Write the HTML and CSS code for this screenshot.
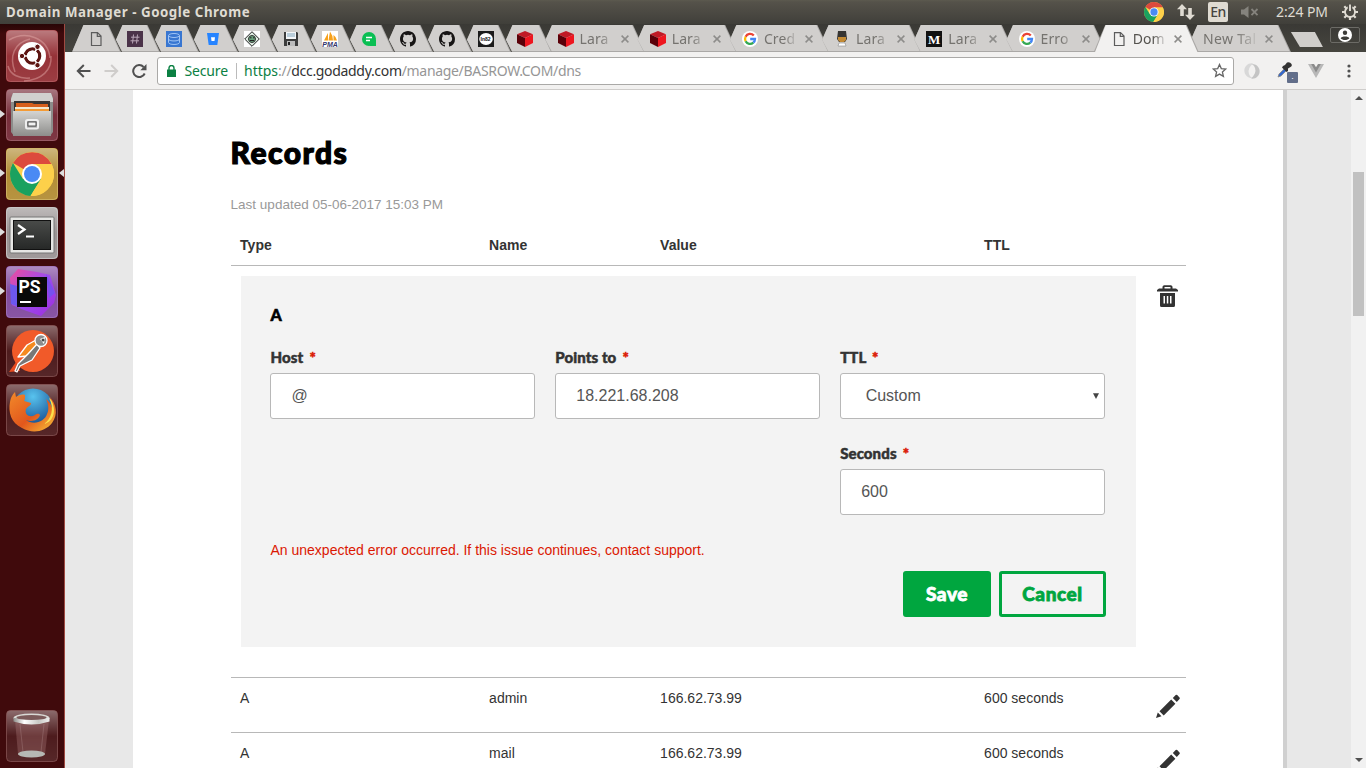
FILE: index.html
```html
<!DOCTYPE html>
<html lang="en">
<head>
<meta charset="utf-8">
<title>Domain Manager</title>
<link rel="stylesheet" href="styles.css">
</head>
<body>
<svg class="defs" width="0" height="0">
  <defs>
    <linearGradient id="tile" x1="0" y1="0" x2="0" y2="1"><stop offset="0" stop-color="#fff" stop-opacity=".4"/><stop offset=".5" stop-color="#fff" stop-opacity=".07"/><stop offset="1" stop-color="#fff" stop-opacity=".12"/></linearGradient>
    <linearGradient id="steel" x1="0" y1="0" x2="0" y2="1"><stop offset="0" stop-color="#d4d4d2"/><stop offset="1" stop-color="#8d8d8b"/></linearGradient>
    <linearGradient id="term" x1="0" y1="0" x2="0" y2="1"><stop offset="0" stop-color="#494b49"/><stop offset="1" stop-color="#262827"/></linearGradient>
    <linearGradient id="storm" x1="0" y1="0" x2="1" y2="1"><stop offset="0" stop-color="#f04c9c"/><stop offset=".5" stop-color="#9a4cf0"/><stop offset="1" stop-color="#a02cdc"/></linearGradient>
    <linearGradient id="fox" x1="0" y1="0" x2="1" y2="1"><stop offset="0" stop-color="#f28a2a"/><stop offset=".55" stop-color="#e2571c"/><stop offset="1" stop-color="#f9c63a"/></linearGradient>
    <radialGradient id="globe" cx=".5" cy=".2" r=".8"><stop offset="0" stop-color="#58c3ee"/><stop offset="1" stop-color="#0d3f86"/></radialGradient>
    <linearGradient id="rim" x1="0" y1="0" x2="1" y2="0"><stop offset="0" stop-color="#8d8d89"/><stop offset=".3" stop-color="#fff"/><stop offset=".7" stop-color="#c8c8c4"/><stop offset="1" stop-color="#eee"/></linearGradient>
    <symbol id="page" viewBox="0 0 16 16"><path d="M3.500 1.600h6l3.500 3.500v9.400H3.500zM9.300 1.800v3.600h3.500" fill="none" stroke="#5c5c5c" stroke-width="1.200"/></symbol>
    <symbol id="close" viewBox="0 0 8 8"><path d="M.6.6l6.800 6.800M7.400.6L.6 7.400" stroke="#8d8c8a" stroke-width="1.500" fill="none"/></symbol>
    <symbol id="cube" viewBox="0 0 16 16"><path d="M8 0l8 3.200L8 7 0 3.200z" fill="#c01a25"/><path d="M0 3.200L8 7v9l-8-4z" fill="#5a0008"/><path d="M16 3.200L8 7v9l8-4z" fill="#ee161f"/></symbol>
    <symbol id="google" viewBox="0 0 16 16"><circle cx="8" cy="8" r="8" fill="#fff"/><path d="M11.800 4.600A5 5 0 0 0 3.600 5.700" fill="none" stroke="#ea4335" stroke-width="2.300"/><path d="M3.600 5.700a5 5 0 0 0 0 4.600" fill="none" stroke="#fbbc05" stroke-width="2.300"/><path d="M3.600 10.300a5 5 0 0 0 7.700 1.400" fill="none" stroke="#34a853" stroke-width="2.300"/><path d="M11.300 11.700A5 5 0 0 0 13 8H8.200" fill="none" stroke="#4285f4" stroke-width="2.300"/></symbol>
    <symbol id="github" viewBox="0 0 16 16"><path fill="#171515" d="M8 0C3.58 0 0 3.58 0 8c0 3.54 2.29 6.53 5.47 7.59.4.07.55-.17.55-.38 0-.19-.01-.82-.01-1.49-2.01.37-2.53-.49-2.69-.94-.09-.23-.48-.94-.82-1.13-.28-.15-.68-.52-.01-.53.63-.01 1.08.58 1.23.82.72 1.21 1.87.87 2.33.66.07-.52.28-.87.51-1.07-1.78-.2-3.64-.89-3.64-3.95 0-.87.31-1.59.82-2.15-.08-.2-.36-1.02.08-2.12 0 0 .67-.21 2.2.82a7.6 7.6 0 0 1 4 0c1.53-1.04 2.2-.82 2.2-.82.44 1.1.16 1.92.08 2.12.51.56.82 1.27.82 2.15 0 3.07-1.87 3.75-3.65 3.95.29.25.54.73.54 1.48 0 1.07-.01 1.93-.01 2.2 0 .21.15.46.55.38A8.01 8.01 0 0 0 16 8c0-4.42-3.58-8-8-8z"/></symbol>
    <symbol id="chrome" viewBox="0 0 44 44"><circle cx="22" cy="22" r="22" fill="#fdd04a"/><path d="M22 22L3 11A22 22 0 0 1 41.500 12H22z" fill="#dc4a3d"/><path d="M3 11A22 22 0 0 0 20.500 44L31 27 22 22 13 27z" fill="#1aa15f"/><path d="M22 12h19.500A22 22 0 0 1 20.500 44L31 27z" fill="#fdd04a"/><circle cx="22" cy="22" r="10" fill="#fff"/><circle cx="22" cy="22" r="8" fill="#4a8af4"/></symbol>
    <symbol id="pencil" viewBox="0 0 24 24"><path fill="#333" d="M0 24l1.800-5.500 3.700 3.700zM3.500 17.300L15.200 5.600l4.200 4.200L7.700 21.500zM16.800 4L19.700 1.100q.8-.6 1.500 0l2.300 2.300q.6.700 0 1.500L20.800 8z"/></symbol>
  </defs>
</svg>

<div class="desktop">
  <header class="panel">
    <span class="panel-title">Domain Manager - Google Chrome</span>
    <div class="indicators">
      <svg class="i-chrome" width="20" height="20"><use href="#chrome"/></svg>
      <svg class="i-net" width="18" height="16" viewBox="0 0 18 16"><path d="M5 0l5 5.300H6.800V12H3.200V5.300H0zM13 16l-5-5.300h3.200V4h3.600v6.700H18z" fill="#dfdbd2"/></svg>
      <span class="lang">En</span>
      <svg class="i-vol" width="18" height="12" viewBox="0 0 18 12"><path d="M0 3.500h3L7.500 0v12L3 8.500H0z" fill="#85837d"/><path d="M10.500 3l6 6.200M16.500 3l-6 6.200" stroke="#85837d" stroke-width="1.800"/></svg>
      <span class="clock">2:24 PM</span>
      <svg class="i-gear" width="16" height="16" viewBox="0 0 16 16"><g stroke="#dfdbd2" fill="none"><circle cx="8" cy="8" r="5" stroke-width="1.900"/><path d="M13 8h3M8 13v3M3 8H0M4.500 4.500L2.300 2.300M11.500 4.500l2.200-2.200M4.500 11.500l-2.200 2.200M11.500 11.500l2.200 2.200" stroke-width="2.200"/><path d="M8 0v6" stroke="#4f4d47" stroke-width="4.500"/><path d="M8 .5V7" stroke-width="1.900"/></g></svg>
    </div>
  </header>

  <div class="workspace">
    <nav class="launcher">
      <div class="app"><svg width="52" height="52" viewBox="0 0 52 52"><rect width="52" height="52" rx="4" fill="#8e2329"/><rect x=".5" y=".5" width="51" height="51" rx="4" fill="url(#tile)" stroke="#b96a6c" stroke-opacity=".7"/><g fill="none" stroke="#e6b0ac" stroke-opacity=".45" stroke-width="1.500"><path d="M3 10C20 0 42 8 44 28M9 42C3 26 8 13 24 9M18 51C36 50 46 40 45 26M2 36c2 9 12 13 22 12"/></g><circle cx="26" cy="26" r="14" fill="#fff"/><circle cx="26.500" cy="26" r="7.200" fill="none" stroke="#5d1512" stroke-width="3.200"/><path d="M26.500 26L14 26M26.500 26l6.500 11M26.500 26L33 15" stroke="#fff" stroke-width="1.500"/><circle cx="26.500" cy="26" r="5.500" fill="#fff"/><g fill="#5d1512" stroke="#fff"><circle cx="16" cy="26" r="2.700"/><circle cx="31.500" cy="16.800" r="2.700"/><circle cx="31.500" cy="35.200" r="2.700"/></g></svg></div>
      <div class="app arrow"><svg width="52" height="52" viewBox="0 0 52 52"><rect width="52" height="52" rx="4" fill="#6d1d2b"/><rect x=".5" y=".5" width="51" height="51" rx="4" fill="url(#tile)" stroke="#ad7a80" stroke-opacity=".6"/><path d="M7 4h38l2 5v34l-3 4H8l-3-4V9z" fill="#8c8c8a"/><path d="M7 4h38l2 6v3H5v-3z" fill="#d0d0ce"/><path d="M8 12h36v12H8z" fill="#373533"/><path d="M10 14h16l2 1h14v7H10z" fill="#d65f1c"/><path d="M9 18h34v3H9z" fill="#f3e8cf"/><path d="M9 20h34v3H9z" fill="#f49b35"/><path d="M7 22h38v25H7z" fill="url(#steel)"/><rect x="20" y="31" width="12" height="8.500" rx="1.500" fill="#999" stroke="#eee" stroke-width="2"/><path d="M22 33h8v4h-8z" fill="#f2f2f2" stroke="#555"/></svg></div>
      <div class="app arrow active"><svg width="52" height="52" viewBox="0 0 52 52"><rect width="52" height="52" rx="4" fill="#ad8527"/><rect x=".5" y=".5" width="51" height="51" rx="4" fill="url(#tile)" stroke="#dcc67f" stroke-opacity=".6"/><use href="#chrome" x="4" y="4" width="44" height="44"/></svg></div>
      <div class="app arrow"><svg width="52" height="52" viewBox="0 0 52 52"><rect width="52" height="52" rx="4" fill="#938c8c"/><rect x=".5" y=".5" width="51" height="51" rx="4" fill="url(#tile)" stroke="#ddd" stroke-opacity=".6"/><rect x="4" y="10" width="44" height="36" rx="1" fill="#e6e6e4" stroke="#777"/><rect x="7.500" y="13.500" width="37" height="29" fill="url(#term)" stroke="#111"/><path d="M12 18l6.500 4.500L12 27" fill="none" stroke="#fff" stroke-width="2.200"/><path d="M20 29.500h8" stroke="#fff" stroke-width="2"/></svg></div>
      <div class="app arrow"><svg width="52" height="52" viewBox="0 0 52 52"><rect width="52" height="52" rx="4" fill="#793e98"/><rect x=".5" y=".5" width="51" height="51" rx="4" fill="url(#tile)" stroke="#ad87c4" stroke-opacity=".6"/><path d="M4 12L12 3l19 3 13 3 6 20-2 8-13 13-17-6-12-5z" fill="url(#storm)"/><path d="M4 18l7 2v20l-6-2z" fill="#6c58ee"/><path d="M40 8l9 19-6 5z" fill="#7750ef"/><rect x="11" y="11" width="30" height="30" fill="#090909"/><text class="ps-mark" x="12.500" y="27">PS</text><path d="M14 36h11" stroke="#fff" stroke-width="2"/></svg></div>
      <div class="app"><svg width="52" height="52" viewBox="0 0 52 52"><rect x=".5" y=".5" width="51" height="51" rx="4" fill="url(#tile)" stroke="#8d5b5b" stroke-opacity=".7"/><circle cx="27" cy="26" r="21" fill="#f15a29"/><path d="M10 37l-7 10 11-1z" fill="#e94b20"/><g stroke="#fff" stroke-width="1.300" stroke-linejoin="round"><path d="M12 32l9-12 9-5 3 4-13 12z" fill="#f58a1f"/><path d="M12 39l10-10 9-10 3 4-8 12-12 6-3 6-2-1z" fill="#777"/><circle cx="35" cy="15.500" r="6" fill="#8c8c8c"/></g><path d="M34 14l5-2-1 7z" fill="#fff"/><circle cx="37" cy="15" r="1.500" fill="#444"/></svg></div>
      <div class="app"><svg width="52" height="52" viewBox="0 0 52 52"><rect x=".5" y=".5" width="51" height="51" rx="4" fill="url(#tile)" stroke="#8d5b5b" stroke-opacity=".7"/><circle cx="27" cy="25" r="20.500" fill="url(#globe)"/><path d="M4 18C5 12 8 9 9 8l1 5c3-2 6-3 9-2 0 3 0 5-1 6l7 2c0 3-3 3-5 6-2 6 4 9 9 6 3-2 4-1 5 0-2 6-9 7-14 5 8 6 19 1 21-6 3-6 0-13-1-15 4 3 5 6 6 9 0-5-1-9-3-12 8 8 9 19 3 27-7 9-20 11-30 5C5 39 2 28 4 18z" fill="url(#fox)"/><path d="M43 14c6 11 2 21-5 26 8-2 12-10 9-20-1-3-2-5-4-6z" fill="#fbe04b"/></svg></div>
      <div class="app trash"><svg width="52" height="52" viewBox="0 0 52 52"><rect x=".5" y=".5" width="51" height="51" rx="4" fill="url(#tile)" stroke="#8d5b5b" stroke-opacity=".7"/><path d="M9 10h34l-4 34q-13 5-27 0z" fill="#b98787" fill-opacity=".3"/><path d="M14 14l3 28M38 14l-3 28" stroke="#b99" stroke-opacity=".3"/><ellipse cx="25.500" cy="44" rx="13.500" ry="3.500" fill="#b6b8b4"/><ellipse cx="25.500" cy="8" rx="18" ry="4.500" fill="#d9d9d5"/><path d="M7.500 8v3.500q18 6 36 0V8z" fill="url(#rim)"/><ellipse cx="25.500" cy="7.500" rx="15" ry="2.600" fill="#7b5a5a"/></svg></div>
    </nav>

    <main class="browser">
      <div class="tabstrip">
        <div class="tab mini first"><svg class="fav"><use href="#page"/></svg></div>
        <div class="tab mini"><svg class="fav" viewBox="0 0 16 16"><path d="M0 0h16v16H0z" fill="#4b3349"/><path d="M6.500 3.500l-1 9M10.500 3.500l-1 9M4 6.200h8.500M3.500 9.800H12" stroke="#b9a6b7"/></svg></div>
        <div class="tab mini"><svg class="fav" viewBox="0 0 16 16"><path d="M0 0h16v16H0z" fill="#3876d1"/><g fill="none" stroke="#9fc4f5" stroke-width="1"><ellipse cx="8" cy="4.500" rx="5.500" ry="2"/><path d="M2.500 4.500v7c0 2.600 11 2.600 11 0v-7M2.500 8c0 2.600 11 2.600 11 0"/></g></svg></div>
        <div class="tab mini"><svg class="fav" viewBox="0 0 16 16"><path d="M2 2h12l-1.700 12H3.700z" fill="#2684ff"/><path d="M6 6.300h4L9.500 10h-3z" fill="#fff"/></svg></div>
        <div class="tab mini"><svg class="fav" viewBox="0 0 16 16"><path d="M0 0h16v16H0z" fill="#fff"/><path d="M8 .7L15.300 8 8 15.300.7 8z" fill="#dfece2" stroke="#222"/><circle cx="8" cy="8" r="3.500" fill="#69a07b" stroke="#333"/><path d="M6 6.800h1.500M9 6.800h1.500M6 9.500h4" stroke="#222"/></svg></div>
        <div class="tab mini"><svg class="fav" viewBox="0 0 16 16"><path d="M1 1h13l1 1v13H1z" fill="#3c3c3c"/><path d="M3 1h10v7H3z" fill="#f4f6f8"/><path d="M4 3h8M4 5h8" stroke="#81a6bd"/><path d="M4 10h8v5H4z" fill="#bbb"/><path d="M5 11h2v3H5z" fill="#222"/></svg></div>
        <div class="tab mini"><svg class="fav" viewBox="0 0 16 16"><path d="M0 0h16v16H0z" fill="#fff"/><path d="M2 9.500L6 2v7.500zM6.500 9.500l1.500-9q3 4 3 9zM11.500 9.500V4q3 2 3.500 5.500z" fill="#f7a11b"/><text class="pma" x=".3" y="15.500">PMA</text></svg></div>
        <div class="tab mini"><svg class="fav" viewBox="0 0 16 16"><circle cx="8" cy="8" r="7" fill="#0abf53"/><path d="M9 9h6v6H9z" fill="#0abf53"/><path d="M5 6.500h6M5 9.500h4" stroke="#fff" stroke-width="1.300"/></svg></div>
        <div class="tab mini"><svg class="fav"><use href="#github"/></svg></div>
        <div class="tab mini"><svg class="fav"><use href="#github"/></svg></div>
        <div class="tab mini"><svg class="fav" viewBox="0 0 16 16"><path d="M0 0h16v16H0z" fill="#1b1b1b"/><ellipse cx="8" cy="8" rx="6.800" ry="6" fill="#fff"/><text class="inn" x="2.600" y="10">In82</text></svg></div>
        <div class="tab mini last-mini"><svg class="fav"><use href="#cube"/></svg></div>
        <div class="tab"><svg class="fav"><use href="#cube"/></svg><span class="label">Lara</span><svg class="x"><use href="#close"/></svg></div>
        <div class="tab"><svg class="fav"><use href="#cube"/></svg><span class="label">Lara</span><svg class="x"><use href="#close"/></svg></div>
        <div class="tab"><svg class="fav"><use href="#google"/></svg><span class="label">Cred</span><svg class="x"><use href="#close"/></svg></div>
        <div class="tab"><svg class="fav" viewBox="0 0 16 16"><path d="M4 0h8l1 8-2 3H5L3 8z" fill="#353432"/><path d="M4 6h8v3l-2 2H6L4 9z" fill="#c38a34"/><path d="M4 15l1-3h6l1 3z" fill="#fff" stroke="#777" stroke-width=".5"/></svg><span class="label">Lara</span><svg class="x"><use href="#close"/></svg></div>
        <div class="tab"><svg class="fav" viewBox="0 0 16 16"><path d="M0 0h16v16H0z" fill="#111"/><text class="medium" x="2" y="12.500">M</text></svg><span class="label">Lara</span><svg class="x"><use href="#close"/></svg></div>
        <div class="tab"><svg class="fav"><use href="#google"/></svg><span class="label">Erro</span><svg class="x"><use href="#close"/></svg></div>
        <div class="tab current"><svg class="fav"><use href="#page"/></svg><span class="label">Dom</span><svg class="x"><use href="#close"/></svg></div>
        <div class="tab plain"><span class="label">New Tal</span><svg class="x"><use href="#close"/></svg></div>
        <div class="newtab"></div>
        <div class="profile"><svg width="14" height="14" viewBox="0 0 14 14"><circle cx="7" cy="7" r="7" fill="#fff"/><circle cx="7" cy="4.800" r="2.200" fill="#3d3c38"/><path d="M2.600 10.200C3.500 8 10.500 8 11.400 10.200 9.500 12.600 4.500 12.600 2.600 10.200z" fill="#3d3c38"/></svg></div>
      </div>

      <div class="toolbar">
        <svg class="nav" width="15" height="14" viewBox="0 0 15 14"><path d="M14.500 7H2M7.800 1L1.800 7l6 6" fill="none" stroke="#505050" stroke-width="2"/></svg>
        <svg class="nav" width="15" height="14" viewBox="0 0 15 14"><path d="M.5 7H13M7.200 1l6 6-6 6" fill="none" stroke="#cfcdcb" stroke-width="2"/></svg>
        <svg class="nav" width="15" height="14" viewBox="0 0 15 14"><path d="M12.700 9.500A6 6 0 1 1 11.600 3" fill="none" stroke="#505050" stroke-width="2"/><path d="M14.500 0v6.200H8.300z" fill="#505050"/></svg>
        <div class="omnibox">
          <svg width="9" height="12" viewBox="0 0 9 12"><path d="M0 4.500h9V12H0z" fill="#0b8043"/><path d="M2 5V3a2.500 2.500 0 0 1 5 0v2" fill="none" stroke="#0b8043" stroke-width="1.400"/></svg>
          <span class="secure">Secure</span>
          <span class="url"><span class="scheme">https</span>://<span class="host">dcc.godaddy.com</span>/manage/BASROW.COM/dns</span>
          <svg class="star" width="15" height="15" viewBox="0 0 15 15"><path d="M7.500 1.500l1.800 4.100 4.500.4-3.400 3 1 4.400-3.900-2.300-3.900 2.300 1-4.400-3.400-3 4.500-.4z" fill="none" stroke="#666" stroke-width="1.300"/></svg>
        </div>
        <div class="extensions">
          <svg width="16" height="16" viewBox="0 0 16 16"><path d="M9 .5C4-.5-.5 4 .5 9c.5 3.500 4 6.500 8 6C4 13 2.500 6 9 .5z" fill="#d8d8d8"/><path d="M7 15.500c5 1 9.500-3.500 8.500-8.500C15 3.500 11.500.5 7.500 1 12 3 13.500 10 7 15.500z" fill="#c4c4c4"/><circle cx="8" cy="8" r="3.200" fill="#f2f1f0"/></svg>
          <div class="picker"><svg width="17" height="17" viewBox="0 0 17 17"><path d="M2 15l1-3 6-6 2 2-6 6z" fill="#3568cc" stroke="#888" stroke-width=".8"/><path d="M7 4l2-1 2-2.500q3-1 4.500 1.500 1 2-1 3L12 6.500V9l-1.500 1L6 5.500z" fill="#333"/></svg><span class="badge">.</span></div>
          <svg class="vue" width="16" height="14" viewBox="0 0 16 14"><path d="M0 0h5l3 5 3-5h5L8 14z" fill="#b8b8b8"/><path d="M3.200 0H6l2 3.300L10 0h2.800L8 8.400z" fill="#8b8b8b"/></svg>
          <svg class="more" width="4" height="14" viewBox="0 0 4 14"><g fill="#505050"><circle cx="2" cy="2" r="1.600"/><circle cx="2" cy="7" r="1.600"/><circle cx="2" cy="12" r="1.600"/></g></svg>
        </div>
      </div>

      <div class="viewport">
        <section class="sheet">
          <h1>Records</h1>
          <p class="updated">Last updated 05-06-2017 15:03 PM</p>
          <div class="row head"><span>Type</span><span>Name</span><span>Value</span><span>TTL</span></div>
          <div class="editing">
            <form class="editor">
              <h2>A</h2>
              <div class="fields">
                <div class="field"><label>Host <b>*</b></label><div class="input">@</div></div>
                <div class="field"><label>Points to <b>*</b></label><div class="input">18.221.68.208</div></div>
                <div class="field"><label>TTL <b>*</b></label><div class="input select">Custom<svg width="6" height="6" viewBox="0 0 6 6"><path d="M0 .3h6L3 6z" fill="#444"/></svg></div></div>
                <div class="field third"><label>Seconds <b>*</b></label><div class="input">600</div></div>
              </div>
              <p class="error">An unexpected error occurred. If this issue continues, contact support.</p>
              <div class="actions"><div class="btn save">Save</div><div class="btn cancel">Cancel</div></div>
            </form>
            <svg class="bin" width="21" height="22" viewBox="0 0 21 22"><path d="M5.500 3.500V1.700Q5.700.2 7.200.2h6.600q1.500 0 1.700 1.500v1.800h3.500l2 1.500v1.500H0V5l2-1.500zM7.500 2v1.500h6V2zM3 8h15v12.500q0 1.500-1.500 1.500h-12Q3 22 3 20.500zM6.500 11v7.500H8V11zM9.800 11v7.500h1.500V11zM13 11v7.500h1.500V11z" fill="#333" fill-rule="evenodd"/></svg>
          </div>
          <div class="row"><span>A</span><span>admin</span><span>166.62.73.99</span><span>600 seconds</span><svg class="pencil"><use href="#pencil"/></svg></div>
          <div class="row"><span>A</span><span>mail</span><span>166.62.73.99</span><span>600 seconds</span><svg class="pencil"><use href="#pencil"/></svg></div>
        </section>
        <div class="scrollbar"><i class="up"></i><i class="thumb"></i><i class="down"></i></div>
      </div>
    </main>
  </div>
</div>
</body>
</html>
```

FILE: styles.css
```css
* { box-sizing: border-box; }
body { margin: 0; font-family: "Liberation Sans", Arial, sans-serif; }
h1, h2, p { margin: 0; }
svg { display: block; flex: none; }
.defs { position: absolute; }
.desktop { width: 1366px; height: 768px; overflow: hidden; display: flex; flex-direction: column; }

.panel { height: 24px; flex: none; display: flex; align-items: center; justify-content: space-between; padding: 0 8px 0 6px; background: linear-gradient(#5c5a4f, #55524a 8%, #403f3a); color: #dfdbd2; font-family: "Noto Sans", sans-serif; }
.panel-title { font-size: 13.3px; font-weight: 700; letter-spacing: .55px; white-space: nowrap; }
.indicators { display: flex; align-items: center; }
.i-net { margin-left: 13px; }
.lang { width: 20px; height: 20px; margin-left: 13px; border-radius: 2px; background: #dfdbd2; color: #45443f; font-size: 14px; font-weight: 500; line-height: 20px; text-align: center; letter-spacing: -.5px; }
.i-vol { margin-left: 13px; }
.clock { margin-left: 17px; width: 53px; font-size: 14px; line-height: 22px; letter-spacing: -.1px; white-space: nowrap; padding-bottom: 1px; }
.i-gear { margin-left: 13px; }

.workspace { flex: 1; min-height: 0; display: flex; }
.launcher { width: 65px; flex: none; padding: 6px 0 6px 6px; display: flex; flex-direction: column; gap: 7px; background: linear-gradient(#280506, #400a0c 10px); border-right: 1px solid #a04a42; }
.app { position: relative; width: 52px; height: 52px; }
.trash { margin-top: auto; }
.arrow::before { content: ""; position: absolute; left: -6px; top: 21px; border: 4.500px solid transparent; border-left: 5px solid #ddd; border-right: 0; }
.active::after { content: ""; position: absolute; right: -6px; top: 21px; border: 4.500px solid transparent; border-right: 5px solid #ddd; border-left: 0; }
.ps-mark { font: 700 17.500px Roboto, sans-serif; fill: #fff; }

.browser { flex: 1; min-width: 0; display: flex; flex-direction: column; }
.tabstrip { height: 28px; flex: none; display: flex; padding: 1px 0 0 7px; background: linear-gradient(#3a3935, #46453f); }
.tab { position: relative; flex: none; width: 105px; margin-right: -12.800px; padding: 0 13px 0 17px; display: flex; align-items: center; isolation: isolate; font-family: "Noto Sans", sans-serif; font-size: 14px; color: #75736f; }
.tab::before, .tab::after { content: ""; position: absolute; inset: 0; z-index: -2; background: #aaa8a6; clip-path: polygon(5px 55%, 11.500px 0, calc(100% - 12.500px) 0, 100% 100%, 11px 100%); }
.tab::after { z-index: -1; background: #d1cfcd; clip-path: polygon(5px 55%, 11.500px 0, calc(100% - 13.500px) 0, calc(100% - 1.500px) calc(100% - 1px), 11px calc(100% - 1px)); }
.tab.mini { width: 49px; margin-right: -10px; padding: 0 0 0 16px; }
.tab.last-mini { width: 51px; margin-right: -11.500px; }
.tab.first::before { clip-path: polygon(0 100%, 11.500px 0, calc(100% - 12.500px) 0, 100% 100%); }
.tab.first::after { clip-path: polygon(.5px calc(100% - 1px), 11.500px 0, calc(100% - 13.500px) 0, calc(100% - 1.500px) calc(100% - 1px)); }
.tab.current { z-index: 2; color: #55534f; }
.tab.current::before { clip-path: polygon(0 100%, 11.500px 0, calc(100% - 12px) 0, 100% 100%); }
.tab.current::after { background: #f2f1f0; clip-path: polygon(1.300px 100%, 12px 0, calc(100% - 13px) 0, calc(100% - 1.300px) 100%); }
.tab.plain { padding-left: 17px; margin-right: -1px; }
.fav { width: 16px; height: 16px; }
.label { width: 33px; height: 20px; margin-left: 6px; white-space: nowrap; line-height: 19px; letter-spacing: .1px; -webkit-mask-image: linear-gradient(90deg, #000 60%, transparent 105%); mask-image: linear-gradient(90deg, #000 60%, transparent 105%); }
.plain .label { width: 54px; margin-left: 0; letter-spacing: .35px; }
.x { width: 8px; height: 8px; margin-left: 8px; }
.newtab { align-self: flex-start; margin: 7px 0 0 1px; width: 32px; height: 15px; background: #d0cecb; clip-path: polygon(0 0, 24px 0, 100% 100%, 9px 100%); }
.profile { width: 30px; height: 16px; margin: 2px 6px 0 auto; border: 1px solid #6c6b66; border-radius: 2px; display: flex; justify-content: center; }
.pma { font: italic 700 7px "Liberation Sans", sans-serif; fill: #34346b; }
.inn { font: 700 5px "Liberation Sans", sans-serif; fill: #111; }
.medium { font: 700 13px "Liberation Serif", serif; fill: #fff; }

.toolbar { height: 38px; flex: none; padding: 0 15px 0 11px; display: flex; align-items: center; background: #f2f1f0; border-bottom: 1px solid #cfcdcb; }
.nav { margin-right: 13px; }
.omnibox { width: 1077px; height: 28px; margin-left: -3px; padding: 0 6px 0 9px; display: flex; align-items: center; background: #fff; border: 1px solid #aaa9a7; border-radius: 3px; font-family: "Noto Sans", sans-serif; font-size: 14px; letter-spacing: -.32px; white-space: nowrap; }
.secure { margin-left: 8.500px; width: 51.500px; color: #0b8043; letter-spacing: -.15px; }
.url { height: 16px; padding-left: 7px; line-height: 15px; border-left: 1px solid #bbb; color: #969696; }
.scheme { color: #0b8043; letter-spacing: 0; }
.host { color: #333; }
.star { margin-left: auto; }
.extensions { display: flex; align-items: center; margin-left: 10px; flex: 1; }
.picker { position: relative; width: 18px; margin-left: 16px; }
.vue { margin-left: 14px; }
.more { margin-left: auto; }
.badge { position: absolute; left: 11px; top: 10px; width: 11px; height: 11px; border-radius: 1px; background: #626e8a; color: #fff; font-size: 9px; line-height: 8px; text-align: center; }

.viewport { flex: 1; min-height: 0; display: flex; justify-content: space-between; padding-left: 68px; background: #e8e8e8; }
.sheet { width: 1154px; padding: 44px 97px 0 97.600px; background: #fff; border-right: 4px solid #d0d0d0; overflow: hidden; color: #333; }
h1 { font: 900 30px/36px Lato, sans-serif; color: #000; letter-spacing: 1.450px; -webkit-text-stroke: 1.200px #000; }
.updated { margin-top: 25px; font-size: 13.500px; line-height: 20px; color: #999; }
.row { position: relative; height: 55px; padding: 10px 10px 10px 9.500px; display: grid; grid-template-columns: 249px 171px 324px 1fr; border-top: 1px solid #b8b8b8; font-size: 14px; line-height: 20px; }
.row.head { height: 41px; margin-top: 10px; border-top: 0; border-bottom: 1px solid #b8b8b8; font-weight: 700; }
.pencil { position: absolute; right: 6.500px; top: 16px; width: 24px; height: 24px; }
.editing { display: flex; justify-content: space-between; padding: 10px 8px 30px 10px; }
.editor { width: 895.400px; height: 371px; padding: 29px 31px 0 29.900px; background: #f3f3f3; }
h2 { font: 900 16px/20px Lato, sans-serif; color: #000; -webkit-text-stroke: .6px #000; }
.fields { margin-top: 22px; display: grid; grid-template-columns: repeat(3, 1fr); gap: 24px 20px; }
.third { grid-column: 3; }
.field label { display: block; margin-bottom: 6px; font: 900 15px/20px Lato, sans-serif; color: #333; letter-spacing: .1px; -webkit-text-stroke: .5px; }
.field b { margin-left: 2.500px; color: #db1802; }
.input { height: 46px; padding: 0 20px; display: flex; align-items: center; background: #fff; border: 1px solid #b8b8b8; border-radius: 3px; font-size: 16px; color: #555; }
.select { justify-content: space-between; padding: 0 5px 0 24.500px; }
.error { margin-top: 25px; font-size: 14px; line-height: 20px; color: #db1802; }
.actions { margin-top: 11px; display: flex; justify-content: flex-end; gap: 8px; margin-right: -1px; }
.btn { height: 46px; border: 3px solid #00a63f; border-radius: 3px; font: 900 19px/40px Lato, sans-serif; letter-spacing: .55px; -webkit-text-stroke: .8px; text-align: center; }
.save { width: 88px; background: #00a63f; color: #fff; }
.cancel { width: 107px; color: #00a63f; }
.bin { margin-top: 9px; }
.scrollbar { width: 15px; padding: 6px 0; display: flex; flex-direction: column; align-items: center; background: #f1f1f1; }
.up { border: 4px solid transparent; border-bottom-color: #505050; border-top: 0; }
.down { margin-top: auto; border: 4px solid transparent; border-top-color: #505050; border-bottom: 0; }
.thumb { width: 11px; height: 144px; margin-top: 72px; background: #c1c1c1; }
```
